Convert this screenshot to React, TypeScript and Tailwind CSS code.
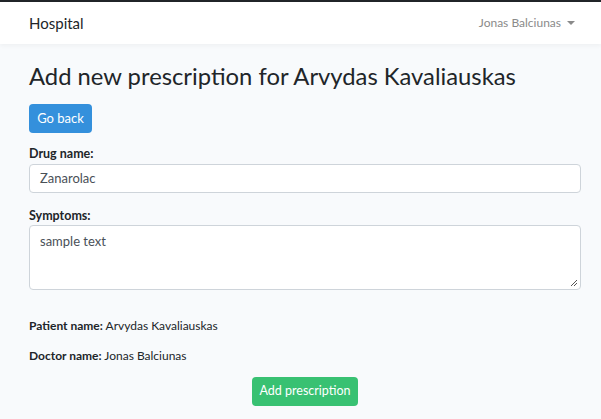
import React from "react";

export default function App() {
  return (
    <div
      className="min-h-[419px] bg-[#f8fafc] text-[#212529]"
      style={{ fontFamily: '"Lato", "Noto Sans", sans-serif' }}
    >
      <div className="h-[2px] bg-[#212529]" />
      <nav className="flex h-[42px] items-center justify-between bg-white pl-[29px] pr-[26px] shadow-[0_2px_4px_rgba(0,0,0,0.04)]">
        <span className="text-[15px] text-[#212529]">Hospital</span>
        <span className="flex items-center text-[12px] text-[#8a8a8a]">
          Jonas Balciunas
          <span className="ml-[6px] h-0 w-0 border-x-[4px] border-t-[4px] border-x-transparent border-t-[#8a8a8a]" />
        </span>
      </nav>
      <main className="pl-[29px] pr-[20px] pt-[16px]">
        <h1 className="text-[23.8px] leading-[32px] text-[#212529]">
          Add new prescription for Arvydas Kavaliauskas
        </h1>
        <button className="mt-[12px] block h-[29px] w-[63px] rounded-[4px] bg-[#3490dc] text-[13px] text-white">
          Go back
        </button>
        <div className="mt-[13px]">
          <label className="block text-[12.5px] font-bold leading-[16px]">Drug name:</label>
          <div className="mt-[2px] flex h-[29px] items-center rounded-[4px] border border-[#ced4da] bg-white px-[10px] text-[13px] text-[#495057]">
            Zanarolac
          </div>
        </div>
        <div className="mt-[15px]">
          <label className="block text-[12.5px] font-bold leading-[16px]">Symptoms:</label>
          <div className="relative mt-[1px] h-[65px] rounded-[4px] border border-[#ced4da] bg-white px-[10px] pt-[6px] text-[13px] text-[#495057]">
            sample text
            <svg className="absolute bottom-[2px] right-[2px]" width="9" height="9" viewBox="0 0 9 9">
              <path d="M8 2 L2 8 M8 5 L5 8" stroke="#555" strokeWidth="1" />
            </svg>
          </div>
        </div>
        <p className="mt-[27px] text-[12px] leading-[18px]">
          <b>Patient name:</b> Arvydas Kavaliauskas
        </p>
        <p className="mt-[12px] text-[12px] leading-[18px]">
          <b>Doctor name:</b> Jonas Balciunas
        </p>
        <div className="mt-[12px] flex justify-center">
          <button className="h-[29px] w-[106px] rounded-[4px] bg-[#38c172] text-[12.5px] text-white">
            Add prescription
          </button>
        </div>
      </main>
    </div>
  );
}
